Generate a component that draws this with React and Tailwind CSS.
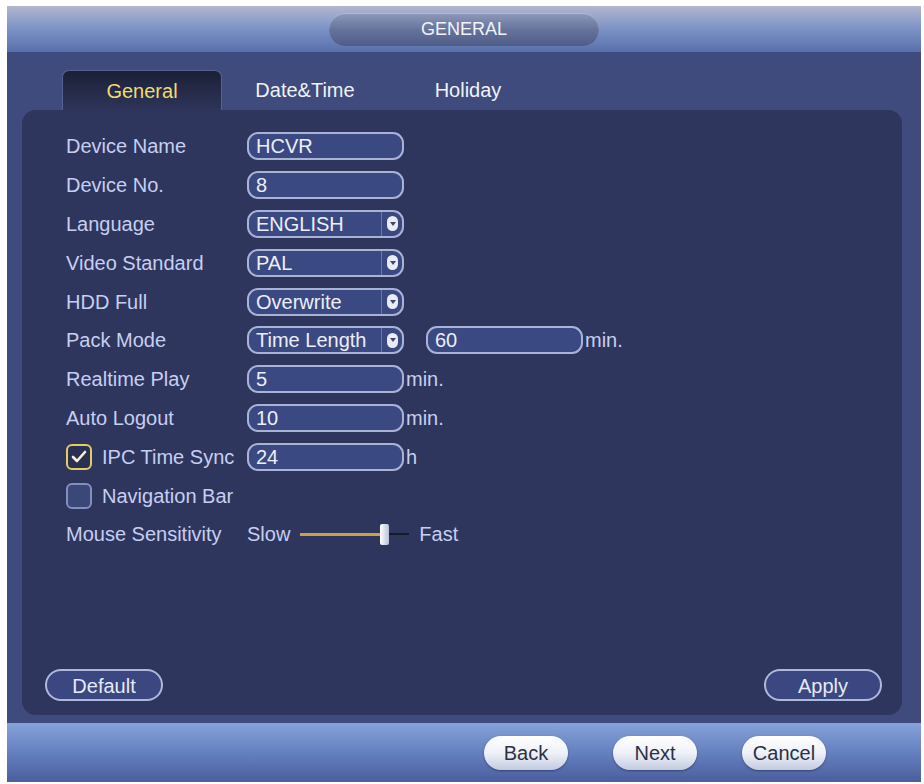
import { useState } from "react";

const FONT = { fontFamily: '"Liberation Sans", Arial, sans-serif' };

/* Rounded text box used across the settings page */
function Field({ value, w = "w-[157px]" }) {
  return (
    <div
      className={`${w} h-[28px] flex items-center px-[7px] rounded-[11px] border-2 border-[#a9b3d6] bg-[#3b4982] text-[20px] text-[#eceef8] leading-none`}
    >
      {value}
    </div>
  );
}

function Dropdown({ value }) {
  return (
    <div className="w-[157px] h-[28px] flex items-center pl-[7px] rounded-[11px] border-2 border-[#a9b3d6] bg-[#3b4982] text-[20px] text-[#eceef8] leading-none">
      <span className="flex-1 whitespace-nowrap">{value}</span>
      <span className="w-px h-full bg-[#6a78a8]" />
      <span className="ml-[5px] mr-[4px] w-[11px] h-[15px] rounded-full bg-[#e9ecf6] flex items-center justify-center">
        <span className="w-0 h-0 border-l-[3px] border-r-[3px] border-t-[4px] border-l-transparent border-r-transparent border-t-[#3b4670]" />
      </span>
    </div>
  );
}

function Checkbox({ checked }) {
  return checked ? (
    <span className="w-[26px] h-[26px] rounded-[6px] border-2 border-[#e3cc6a] bg-[#2b3050] flex items-center justify-center">
      <svg width="16" height="14" viewBox="0 0 16 14">
        <polyline points="2,7 6,11 14,2" fill="none" stroke="#f4f0dc" strokeWidth="2.6" strokeLinecap="round" strokeLinejoin="round" />
      </svg>
    </span>
  ) : (
    <span className="w-[26px] h-[26px] rounded-[6px] border-2 border-[#8390bb] bg-[#3a4878]" />
  );
}

function Row({ label, children }) {
  return (
    <div className="h-[38.8px] flex items-center">
      <div className="w-[181px] shrink-0 flex items-center text-[20px] text-[#c6cef2] whitespace-nowrap">{label}</div>
      <div className="flex items-center text-[20px] text-[#c6cef2]">{children}</div>
    </div>
  );
}

function PillButton({ children, className = "" }) {
  return (
    <button
      className={`h-[32px] rounded-full border-2 border-[#aeb8da] bg-[#3a4780] text-[20px] text-[#e6e9f6] ${className}`}
    >
      {children}
    </button>
  );
}

function FooterButton({ children }) {
  return (
    <button className="w-[84px] h-[34px] rounded-full bg-gradient-to-b from-[#ffffff] via-[#eef1f8] to-[#c3cbe0] text-[20px] text-[#2c3042] shadow-[0_1px_2px_rgba(20,30,60,0.5)]">
      {children}
    </button>
  );
}

export default function App() {
  const [tab, setTab] = useState("General");
  const tabs = [
    { name: "General", w: "w-[160px]" },
    { name: "Date&Time", w: "w-[166px]" },
    { name: "Holiday", w: "w-[160px]" },
  ];

  return (
    <div className="w-[924px] h-[784px] bg-white pl-[7px] pt-[6px]" style={FONT}>
      <div className="w-[914px] h-[776px] flex flex-col">
        {/* title bar */}
        <div className="h-[46px] shrink-0 flex items-center justify-center bg-gradient-to-b from-[#b2b6ce] via-[#7c93c6] to-[#5870aa]">
          <div className="w-[270px] h-[33px] rounded-full bg-gradient-to-b from-[#8e9abb] via-[#66749c] to-[#4e5c88] shadow-[inset_0_1px_1px_rgba(255,255,255,0.35)] flex items-center justify-center text-[18px] text-[#f2f3f8]">
            GENERAL
          </div>
        </div>

        {/* body */}
        <div className="flex-1 flex flex-col bg-[#3e4b7c] pl-[15px] pr-[19px] pt-[18px] pb-[8px]">
          <div className="flex ml-[40px] h-[40px] shrink-0">
            {tabs.map((t) => (
              <button
                key={t.name}
                onClick={() => setTab(t.name)}
                className={`${t.w} h-full flex items-center justify-center text-[20px] ${
                  tab === t.name
                    ? "rounded-t-[7px] bg-gradient-to-b from-[#1b1f37] to-[#2e3559] border-t border-l border-r border-[#56628f] text-[#efdc6c]"
                    : "text-[#f1f2f8]"
                }`}
              >
                {t.name}
              </button>
            ))}
          </div>

          <div className="flex-1 rounded-[14px] bg-[#2f365d] flex flex-col justify-between pt-[17px] pb-[14px]">
            <div className="pl-[44px]">
              <Row label="Device Name">
                <Field value="HCVR" />
              </Row>
              <Row label="Device No.">
                <Field value="8" />
              </Row>
              <Row label="Language">
                <Dropdown value="ENGLISH" />
              </Row>
              <Row label="Video Standard">
                <Dropdown value="PAL" />
              </Row>
              <Row label="HDD Full">
                <Dropdown value="Overwrite" />
              </Row>
              <Row label="Pack Mode">
                <Dropdown value="Time Length" />
                <span className="ml-[22px]">
                  <Field value="60" />
                </span>
                <span className="ml-[2px]">min.</span>
              </Row>
              <Row label="Realtime Play">
                <Field value="5" />
                <span className="ml-[2px]">min.</span>
              </Row>
              <Row label="Auto Logout">
                <Field value="10" />
                <span className="ml-[2px]">min.</span>
              </Row>
              <Row
                label={
                  <>
                    <Checkbox checked />
                    <span className="ml-[10px]">IPC Time Sync</span>
                  </>
                }
              >
                <Field value="24" />
                <span className="ml-[2px]">h</span>
              </Row>
              <Row
                label={
                  <>
                    <Checkbox />
                    <span className="ml-[10px]">Navigation Bar</span>
                  </>
                }
              />
              <Row label="Mouse Sensitivity">
                <span>Slow</span>
                <div className="ml-[10px] w-[109px] h-[22px] flex items-center">
                  <span className="w-[80px] h-[3px] bg-[#c9a241]" />
                  <span className="w-[9px] h-[21px] rounded-[2px] bg-gradient-to-r from-[#ffffff] to-[#b9c2dc]" />
                  <span className="w-[20px] h-[2px] bg-[#151a2c]" />
                </div>
                <span className="ml-[10px]">Fast</span>
              </Row>
            </div>

            <div className="flex justify-between pl-[23px] pr-[20px]">
              <PillButton className="w-[118px]">Default</PillButton>
              <PillButton className="w-[118px]">Apply</PillButton>
            </div>
          </div>
        </div>

        {/* bottom bar */}
        <div className="h-[59px] shrink-0 flex items-center justify-end gap-[45px] pr-[95px] bg-gradient-to-b from-[#86a2da] via-[#6580bf] to-[#4b5e9e]">
          <FooterButton>Back</FooterButton>
          <FooterButton>Next</FooterButton>
          <FooterButton>Cancel</FooterButton>
        </div>
      </div>
    </div>
  );
}
